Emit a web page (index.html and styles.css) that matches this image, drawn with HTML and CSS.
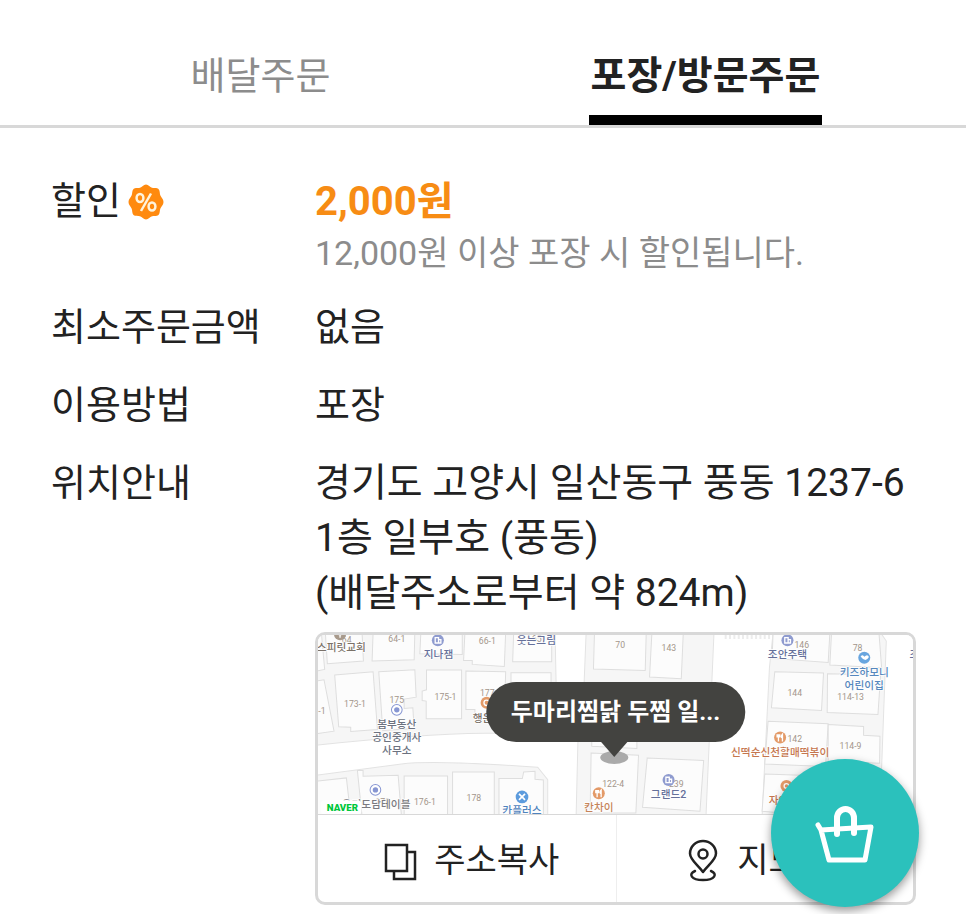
FILE: index.html
```html
<!DOCTYPE html>
<html lang="ko">
<head>
  <meta charset="UTF-8">
  <meta name="viewport" content="width=device-width, initial-scale=1.0">
  <title>포장/방문주문</title>
  <link rel="stylesheet" href="styles.css">
</head>
<body>
  <nav class="tabs">
    <button type="button" class="tab"><span>배달주문</span></button>
    <button type="button" class="tab active"><span>포장/방문주문</span></button>
  </nav>

  <main class="info">
    <dl class="info-list">
      <dt>할인
        <svg class="badge" viewBox="0 0 36 36" aria-hidden="true">
          <path fill="#ff8a0f" d="M18 .5c2.600 0 3.800 2.600 6 3.300s4.800-.5 6.500 1.300 1 4.500 1.900 6.500 3.100 3.600 3.100 6.400-2.200 4.400-3.100 6.400-.2 4.800-1.900 6.500-4.400.7-6.500 1.400-3.400 3.200-6 3.200-3.900-2.500-6-3.200-4.800.3-6.500-1.400-1-4.500-1.900-6.500S.5 20.800.5 18s2.200-4.400 3.100-6.400.2-4.700 1.900-6.500S9.900 4.500 12 3.800 15.400.5 18 .5z"/>
          <g fill="none" stroke="#fff3dc" stroke-width="2.500">
            <ellipse cx="12" cy="14" rx="3.400" ry="4"/>
            <ellipse cx="24" cy="22.500" rx="3.400" ry="4"/>
            <path d="M23 9.500L13 27"/>
          </g>
        </svg>
      </dt>
      <dd>
        <strong class="discount">2,000원</strong>
        <p class="discount-note">12,000원 이상 포장 시 할인됩니다.</p>
      </dd>

      <dt>최소주문금액</dt>
      <dd>없음</dd>

      <dt>이용방법</dt>
      <dd>포장</dd>

      <dt>위치안내</dt>
      <dd>
        <p class="address">경기도 고양시 일산동구 풍동 1237-6<br>1층 일부호 (풍동)<br>(배달주소로부터 약 824m)</p>

        <div class="map-card">
          <div class="map">
            <svg class="map-canvas" viewBox="0 0 1782 540" preserveAspectRatio="xMidYMid slice" role="img" aria-label="지도">
              <rect width="1782" height="540" fill="#f6f6f6"/>

              <!-- roads -->
              <g class="road">
                <path d="M-5 332Q300 298 500 296L779 296 796 170 803-5H710L713 140V298L779 298 773 545H688V435L658 398Q350 376 250 388L-5 422z"/>
                <path d="M1186-5H1363L1352 100 1330 545H1162z"/>
                <path d="M1685-5L1702 20 1688 400 1680 545H1790V-5z"/>
              </g>
              <path d="M1218 5H1365" stroke="#ececec" stroke-width="18" stroke-dasharray="6 7"/>

              <!-- buildings -->
              <g class="building">
                <path d="M-5-5H10L20 105-5 110z"/>
                <path d="M22-5H132L136 80 28 88z"/>
                <path d="M165-5H290L288 76 162 80z"/>
                <path d="M308-5H432V60L305 58z"/>
                <path d="M440-5H562L558 96 462 90V78H436z"/>
                <path d="M586-5H700V82H583z"/>
                <path d="M-5 140L18 136 48 290-5 298z"/>
                <path d="M50 122L165 112 178 285 98 291V278L62 277z"/>
                <path d="M182 112L290 106 294 188 258 194V222L284 220 288 282 194 288z"/>
                <path d="M325 107H430V253H324V200L312 198V170L325 166z"/>
                <path d="M443 110L562 112 558 255 470 250V225H443z"/>
                <path d="M578 115H698V240H578z"/>
                <path d="M-5 440L85 430 98 545H-5z"/>
                <path d="M118 408H135V425L240 422 250 545H132z"/>
                <path d="M258 424H388V545H258z"/>
                <path d="M403 412H528V545H403z"/>
                <path d="M542 432H612L616 412 650 410V434L675 436V545H542z"/>
                <path d="M828-5H983L980 108 825 104z"/>
                <path d="M1000-5H1094L1088 133 993 128z"/>
                <path d="M820 285H955V342L820 335z"/>
                <path d="M818 355L960 362 952 535H815z"/>
                <path d="M986 370L1155 378 1144 530 972 518z"/>
                <path d="M1363-5H1533L1528 84 1360 72z"/>
                <path d="M1538-5H1680L1688 100 1533 92z"/>
                <path d="M1368 112L1514 116 1508 228 1358 220z"/>
                <path d="M1526 118L1685 122 1677 240 1525 234z"/>
                <path d="M1348 260L1528 268 1520 396 1338 388z"/>
                <path d="M1528 270L1634 276V302L1683 305 1682 386 1528 380z"/>
                <path d="M1338 418L1510 424V545L1330 530z"/>
              </g>

              <!-- lot numbers -->
              <g class="lot">
                <text x="86" y="27">64</text>
                <text x="236" y="23">64-1</text>
                <text x="507" y="30">66-1</text>
                <text x="655" y="23">65</text>
                <text x="12" y="240">-1</text>
                <text x="111" y="218">173-1</text>
                <text x="236" y="206">175</text>
                <text x="382" y="197">175-1</text>
                <text x="507" y="186">177</text>
                <text x="194" y="512">178</text>
                <text x="320" y="510">176-1</text>
                <text x="467" y="500">178</text>
                <text x="905" y="41">70</text>
                <text x="1051" y="50">143</text>
                <text x="884" y="458">122-4</text>
                <text x="1073" y="458">239</text>
                <text x="1449" y="40">146</text>
                <text x="1616" y="50">78</text>
                <text x="1428" y="186">144</text>
                <text x="1595" y="197">114-13</text>
                <text x="1428" y="322">142</text>
                <text x="1595" y="344">114-9</text>
              </g>

              <!-- markers -->
              <g class="ring">
                <circle cx="236" cy="226" r="16"/>
                <circle cx="172" cy="466" r="16"/>
              </g>
              <g fill="#8796d2">
                <circle cx="236" cy="226" r="8"/>
                <circle cx="172" cy="466" r="8"/>
              </g>
              <g fill="#8f9bcf">
                <circle cx="359" cy="18" r="18"/>
                <circle cx="1406" cy="18" r="18"/>
                <circle cx="1050" cy="436" r="18"/>
              </g>
              <g fill="none" stroke="#fff" stroke-width="4">
                <path d="M351 26V10H361V26M361 16H368V26H349"/>
                <path d="M1398 26V10H1408V26M1408 16H1415V26H1396"/>
                <path d="M1042 444V428H1052V444M1052 434H1059V444H1040"/>
              </g>
              <circle cx="611" cy="487" r="19" fill="#5c9bdd"/>
              <path d="M602 478L620 496M620 478L602 496" stroke="#fff" stroke-width="5"/>
              <circle cx="1636" cy="70" r="18" fill="#67a5df"/>
              <path d="M1625 66Q1632 58 1636 67 1646 57 1650 68 1640 86 1625 66z" fill="#fff"/>
              <circle cx="66" cy="0" r="18" fill="#a89a8c"/>
              <g fill="#e39a68">
                <circle cx="505" cy="205" r="18"/>
                <circle cx="841" cy="476" r="18"/>
                <circle cx="1384" cy="309" r="18"/>
                <circle cx="1403" cy="454" r="18"/>
              </g>
              <g fill="none" stroke="#fff" stroke-width="4">
                <path d="M57-8Q66 12 75-8M66 0V10"/>
                <circle cx="505" cy="205" r="8"/>
                <path d="M836 466V488M832 466V474H840V466M848 488V466Q841 474 848 478"/>
                <path d="M1379 299V321M1375 299V307H1383V299M1391 321V299Q1384 307 1391 311"/>
                <circle cx="1403" cy="454" r="7"/>
              </g>

              <!-- place names -->
              <g class="place">
                <text x="70" y="50" fill="#7a7168">스피릿교회</text>
                <text x="361" y="71">지나잼</text>
                <text x="654" y="29">웃는그림</text>
                <text x="236" y="280" fill="#6c7280">봄부동산</text>
                <text x="236" y="319" fill="#6c7280">공인중개사</text>
                <text x="236" y="358" fill="#6c7280">사무소</text>
                <text x="493" y="262" fill="#7a7168">행운</text>
                <text x="174" y="521" fill="#7a7a80">우리도담테이블</text>
                <text x="611" y="538" fill="#4f83bd">카플러스</text>
                <text x="841" y="530" fill="#c5845a">칸차이</text>
                <text x="1050" y="491">그랜드2</text>
                <text x="1406" y="71">조안주택</text>
                <text x="1636" y="124" fill="#5587bd">키즈하모니</text>
                <text x="1636" y="163" fill="#5587bd">어린이집</text>
                <text x="1384" y="364" fill="#c5764e">신떡순신천할매떡볶이</text>
                <text x="1394" y="509" fill="#c5764e">자연식</text>
                <text x="1786" y="71">조</text>
              </g>

              <rect x="8" y="497" width="122" height="43" rx="12" fill="#fff"/>
              <text class="naver" x="73" y="529">NAVER</text>
            </svg>
            <div class="pin">두마리찜닭 두찜 일...</div>
          </div>

          <div class="map-actions">
            <button type="button" class="map-button">
              <svg class="icon" viewBox="0 0 36 44" fill="none" stroke="#222" stroke-width="2.500" aria-hidden="true">
                <path d="M4 6H25V32H4zM25 13H33V40H12V32"/>
              </svg>
              주소복사
            </button>
            <button type="button" class="map-button view-map">
              <svg class="icon" viewBox="0 0 36 44" fill="none" stroke="#222" stroke-width="2.500" stroke-linecap="round" stroke-linejoin="round" aria-hidden="true">
                <path d="M18 33C13 26 5 21 5 14.500A13 12.500 0 0 1 31 14.500C31 21 23 26 18 33z"/>
                <circle cx="18" cy="15" r="4.500"/>
                <path d="M10 32C3 35 6 41 18 41S33 35 26 32"/>
              </svg>
              지도보기
            </button>
          </div>
        </div>
      </dd>
    </dl>
  </main>

  <button type="button" class="cart-button" aria-label="장바구니">
    <svg viewBox="0 -2 60 60" fill="none" stroke="#fff" stroke-width="5" stroke-linecap="round" stroke-linejoin="round" aria-hidden="true">
      <path d="M3 20L6 25 56 22 50 55H14L6 25"/>
      <path d="M22 29V13A8.500 9 0 0 1 39 13V28" stroke-width="6"/>
    </svg>
  </button>
</body>
</html>
```
FILE: styles.css
```css
* {
  box-sizing: border-box;
}
body {
  margin: 0;
  background: #fff;
  color: #222;
  font-family: Roboto, "Noto Sans CJK KR", sans-serif;
  font-size: 38px;
  line-height: 55px;
}
button {
  margin: 0;
  padding: 0;
  border: none;
  background: none;
  color: inherit;
  font: inherit;
  cursor: pointer;
}
p,
dl,
dd {
  margin: 0;
}

/* tabs */
.tabs {
  display: flex;
  padding: 49px 38px 0;
  border-bottom: 3px solid #d8d8d8;
}
.tab {
  flex: 1;
  color: #8c8c8c;
}
.tab span {
  display: inline-block;
  padding: 0 2px 11px;
  border-bottom: 10px solid transparent;
}
.tab.active {
  color: #222;
  font-size: 39px;
  font-weight: bold;
}
.tab.active span {
  border-bottom-color: #000;
}

/* order info */
.info {
  padding: 46px 50px 8px 51px;
}
.info-list {
  display: grid;
  grid-template-columns: 264px 1fr;
  row-gap: 23px;
}
.info-list dt {
  display: flex;
  align-items: center;
  align-self: start;
  gap: 7px;
}
.badge {
  width: 36px;
  height: 36px;
}
.discount {
  display: block;
  color: #f78c14;
  font-size: 40px;
}
.discount-note {
  color: #8c8c8c;
  font-size: 34px;
  line-height: 48px;
}
.address {
  font-size: 39px;
}

/* map card */
.map-card {
  margin-top: 11px;
  border: 3px solid #d8d8d8;
  border-radius: 10px;
  overflow: hidden;
}
.map {
  position: relative;
  height: 180px;
  border-bottom: 1px solid #d8d8d8;
}
.map-canvas {
  display: block;
  width: 100%;
  height: 100%;
}
.road {
  fill: #fff;
  stroke: #e3e3e3;
  stroke-width: 3;
}
.building {
  fill: #fcfcfc;
  stroke: #dedede;
  stroke-width: 3;
}
.lot {
  fill: #a3968b;
  font-size: 26px;
  text-anchor: middle;
}
.ring {
  fill: #fff;
  stroke: #8796d2;
  stroke-width: 3;
}
.place {
  fill: #65709a;
  stroke: #fff;
  stroke-width: 4;
  paint-order: stroke;
  font-size: 32px;
  font-weight: 500;
  text-anchor: middle;
}
.naver {
  fill: #00c73c;
  font-size: 29px;
  font-weight: 900;
  text-anchor: middle;
}
.pin {
  position: absolute;
  top: 47px;
  left: 50%;
  padding: 0 25px;
  border-radius: 30px;
  background: #434340;
  color: #fff;
  font-size: 24px;
  font-weight: bold;
  line-height: 60px;
  white-space: nowrap;
  transform: translateX(-50%);
}
.pin::before {
  content: "";
  position: absolute;
  top: 69px;
  left: 50%;
  width: 28px;
  height: 13px;
  margin-left: -15px;
  border-radius: 50%;
  background: #aaa;
}
.pin::after {
  content: "";
  position: absolute;
  top: 59px;
  left: 50%;
  margin-left: -15px;
  border: 14px solid transparent;
  border-top: 16px solid #434340;
  border-bottom: none;
}
.map-actions {
  display: grid;
  grid-template-columns: 1fr 1fr;
  height: 87px;
}
.map-button {
  display: flex;
  align-items: center;
  justify-content: center;
  gap: 16px;
  padding: 4px 0 0 8px;
  font-size: 34px;
}
.view-map {
  padding-left: 18px;
  border-left: 1px solid #eee;
}
.icon {
  width: 36px;
  height: 44px;
}

/* floating cart */
.cart-button {
  position: fixed;
  right: 47px;
  bottom: 7px;
  display: flex;
  align-items: center;
  justify-content: center;
  width: 148px;
  height: 148px;
  border-radius: 50%;
  background: #2bc1bc;
  box-shadow: 0 4px 10px rgba(0, 0, 0, 0.4);
}
.cart-button svg {
  width: 60px;
  height: 60px;
}
```
